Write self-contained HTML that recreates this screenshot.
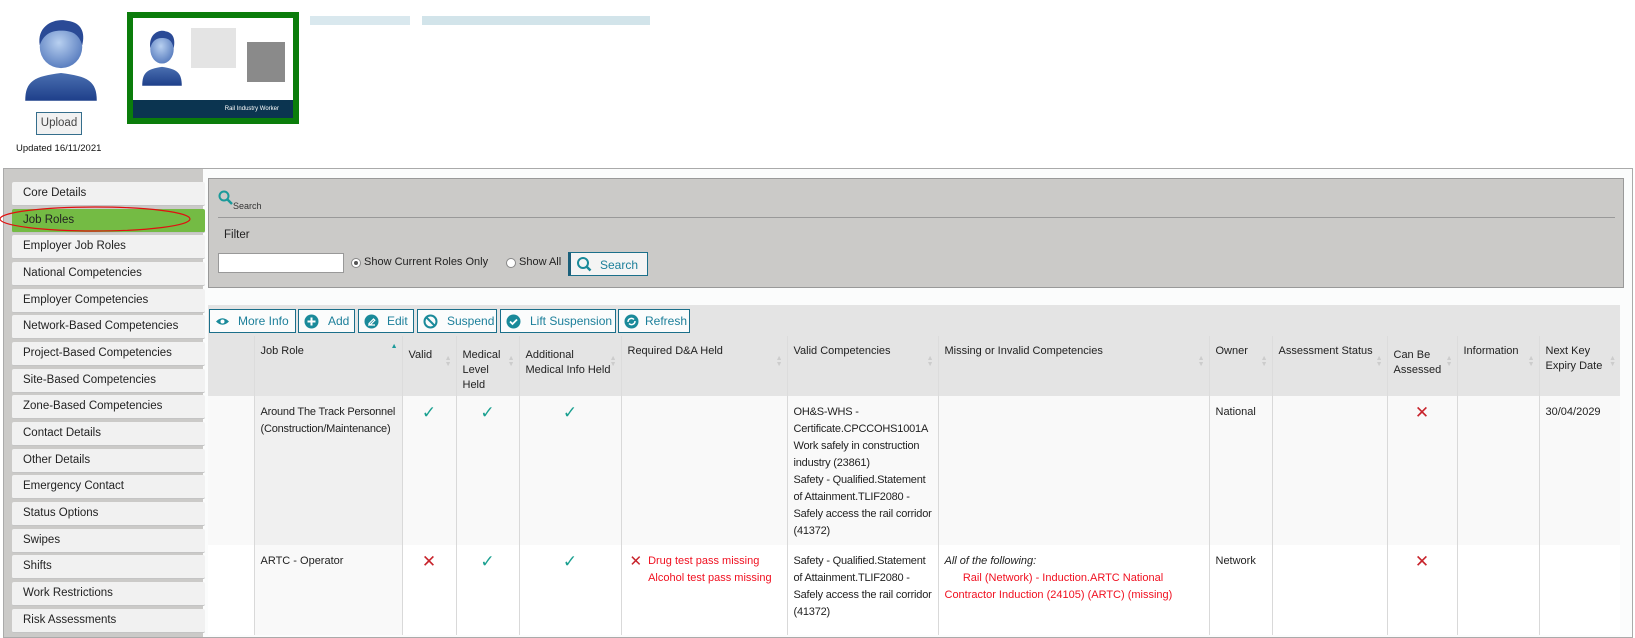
<!DOCTYPE html>
<html><head><meta charset="utf-8"><style>
*{box-sizing:border-box;margin:0;padding:0}
body{width:1635px;height:628px;overflow:hidden;background:#fff;font-family:"Liberation Sans",sans-serif;font-size:12px;color:#222;position:relative}
.abs{position:absolute}
.side{position:absolute;left:3px;top:168px;width:200px;height:470px;background:#cbcac8;border:1px solid #aaa;border-right:none}
.item{position:absolute;left:8px;width:193px;height:24px;background:#f1f1f1;border-radius:2px;border-bottom:1px solid #c4c4c4;padding:5px 0 0 11px;font-size:11.5px;color:#222}
.main{position:absolute;left:202px;top:168px;width:1431px;height:470px;border:1px solid #aaa;background:#fbfcfc}
.panel{position:absolute;left:208px;top:178px;width:1416px;height:110px;background:#cbcac8;border:1px solid #999}
.btn{position:absolute;top:309px;height:24px;border:1px solid #1b6f8a;background:#fbfcfc;color:#1c7f9a;font-size:12px;padding:4px 0 0 0}
.btn svg{position:absolute;left:5px;top:4px}
table{position:absolute;left:208px;top:305px;width:1412px;border-collapse:collapse;table-layout:fixed;font-size:11px}
th{background:#e4e4e4;font-weight:normal;text-align:left;vertical-align:top;padding:8px 6px 0 6px;height:60px;line-height:15px;border-left:1px solid #dcdcdc;position:relative}
td{vertical-align:top;padding:8px 6px 0 6px;line-height:17px;border-left:1px solid #d9d9d9;background:#f9f9f9}
tr.r2 td{background:#fff}
td.jr{background:#f0f0f0}
tr.r2 td.jr{background:#f9f9f9}
.nw{white-space:nowrap;letter-spacing:-0.2px}
.red{color:#f01020}
.srt{position:absolute;right:4px;top:20px;color:#ccc;font-size:7px;line-height:6px}
.c{text-align:center}
</style></head><body>
<svg class="abs" style="left:23px;top:16px" width="76" height="88" viewBox="0 0 68 108" preserveAspectRatio="none">
<defs><linearGradient id="g" x1="0" y1="0" x2="0" y2="1"><stop offset="0" stop-color="#4a6fb0"/><stop offset="1" stop-color="#1e3f8a"/></linearGradient>
<radialGradient id="f" cx=".45" cy=".4" r=".6"><stop offset="0" stop-color="#b8d0f0"/><stop offset="1" stop-color="#5b7fc0"/></radialGradient></defs>
<path d="M2 104 C2 80 10 74 34 70 C58 74 66 80 66 104 Z" fill="url(#g)"/>
<ellipse cx="34" cy="38" rx="19" ry="26" fill="url(#f)"/>
<path d="M15 36 C12 10 30 2 40 6 C52 8 56 20 53 36 C50 22 44 18 34 18 C24 18 18 24 15 36Z" fill="#2a4a96"/>
</svg>
<div class="abs" style="left:36px;top:112px;width:46px;height:23px;border:1px solid #356e8c;background:#f1f1f1;font-size:11.5px;color:#444;text-align:center;padding-top:4px">Upload</div>
<div class="abs" style="left:16px;top:143px;font-size:9.5px;color:#111">Updated 16/11/2021</div>
<div class="abs" style="left:127px;top:12px;width:172px;height:112px;background:#0b7d0b;padding:6px">
 <div style="position:relative;width:160px;height:100px;background:#fff">
  <svg style="position:absolute;left:8px;top:10px" width="42" height="60" viewBox="0 0 68 108" preserveAspectRatio="none"><path d="M2 104 C2 80 10 74 34 70 C58 74 66 80 66 104 Z" fill="url(#g)"/><ellipse cx="34" cy="38" rx="19" ry="26" fill="url(#f)"/><path d="M15 36 C12 10 30 2 40 6 C52 8 56 20 53 36 C50 22 44 18 34 18 C24 18 18 24 15 36Z" fill="#2a4a96"/></svg>
  <div style="position:absolute;left:58px;top:10px;width:45px;height:40px;background:#ddd;opacity:.8"></div>
  <div style="position:absolute;left:114px;top:24px;width:38px;height:40px;background:#8a8a8a"></div>
  <div style="position:absolute;left:0;top:82px;width:160px;height:18px;background:#0b3450;color:#fff;font-size:6px;text-align:right;padding:6px 14px 0 0">Rail Industry Worker</div>
 </div>
</div>
<div class="abs" style="left:310px;top:16px;width:100px;height:9px;background:#d9e8ee"></div>
<div class="abs" style="left:422px;top:16px;width:228px;height:9px;background:#d2e4ea"></div>

<div class="main"></div>
<div class="side">
<div class="item" style="top:13px">Core Details</div>
<div class="item" style="top:40px;background:#74bb44">Job Roles</div>
<div class="item" style="top:66px">Employer Job Roles</div>
<div class="item" style="top:93px">National Competencies</div>
<div class="item" style="top:120px">Employer Competencies</div>
<div class="item" style="top:146px">Network-Based Competencies</div>
<div class="item" style="top:173px">Project-Based Competencies</div>
<div class="item" style="top:200px">Site-Based Competencies</div>
<div class="item" style="top:226px">Zone-Based Competencies</div>
<div class="item" style="top:253px">Contact Details</div>
<div class="item" style="top:280px">Other Details</div>
<div class="item" style="top:306px">Emergency Contact</div>
<div class="item" style="top:333px">Status Options</div>
<div class="item" style="top:360px">Swipes</div>
<div class="item" style="top:386px">Shifts</div>
<div class="item" style="top:413px">Work Restrictions</div>
<div class="item" style="top:440px">Risk Assessments</div>
</div>
<svg class="abs" style="left:0;top:201px" width="200" height="36"><ellipse cx="95" cy="18" rx="95" ry="12" fill="none" stroke="#e01010" stroke-width="1.2"/></svg>

<div class="panel">
 <svg style="position:absolute;left:9px;top:11px" width="16" height="16"><circle cx="6" cy="6" r="4.5" fill="none" stroke="#1a9a9a" stroke-width="2"/><path d="M9 9 L14 14" stroke="#1a9a9a" stroke-width="2.5"/></svg>
 <div style="position:absolute;left:24px;top:22px;font-size:9px;color:#333">Search</div>
 <div style="position:absolute;left:9px;top:38px;width:1397px;height:1px;background:#999"></div>
 <div style="position:absolute;left:15px;top:50px;font-size:11.5px">Filter</div>
 <div style="position:absolute;left:9px;top:74px;width:126px;height:20px;background:#fff;border:1px solid #999"></div>
 <div style="position:absolute;left:142px;top:79px;width:10px;height:10px;border-radius:50%;border:1px solid #888;background:#fff"><div style="margin:2px;width:4px;height:4px;border-radius:50%;background:#555"></div></div>
 <div style="position:absolute;left:155px;top:77px;font-size:11px">Show Current Roles Only</div>
 <div style="position:absolute;left:297px;top:79px;width:10px;height:10px;border-radius:50%;border:1px solid #888;background:#fff"></div>
 <div style="position:absolute;left:310px;top:77px;font-size:11px">Show All</div>
 <div style="position:absolute;left:359px;top:73px;width:80px;height:24px;background:#f4f4f4;border:1px solid #1b6f8a;border-left:3px solid #1b5f7a;color:#1c7f9a;padding:5px 0 0 29px">Search
 <svg style="position:absolute;left:5px;top:3px" width="16" height="16"><circle cx="7" cy="7" r="5" fill="none" stroke="#1a8a9a" stroke-width="2"/><path d="M10.5 10.5 L14.5 14.5" stroke="#1a8a9a" stroke-width="2.5"/></svg></div>
</div>

<div class="abs" style="left:208px;top:305px;width:1412px;height:31px;background:#e4e4e4"></div>
<div class="btn" style="left:209px;width:87px;padding-left:28px"><svg width="15" height="15"><path d="M1 7.5 Q7.5 1 14 7.5 Q7.5 14 1 7.5Z" fill="#1a8a9a"/><circle cx="7.5" cy="7.5" r="2" fill="#fff"/></svg>More Info</div>
<div class="btn" style="left:298px;width:57px;padding-left:29px"><svg width="15" height="15"><circle cx="7.5" cy="7.5" r="7" fill="#1a8a9a"/><path d="M7.5 3.5v8M3.5 7.5h8" stroke="#fff" stroke-width="2"/></svg>Add</div>
<div class="btn" style="left:358px;width:56px;padding-left:28px"><svg width="15" height="15"><circle cx="7.5" cy="7.5" r="7" fill="#1a8a9a"/><path d="M4 11h7M5 9.5l4.5-4.5 1.3 1.3-4.5 4.5z" stroke="#fff" stroke-width="1.2" fill="none"/></svg>Edit</div>
<div class="btn" style="left:417px;width:80px;padding-left:29px"><svg width="15" height="15"><circle cx="7.5" cy="7.5" r="6" fill="none" stroke="#1a8a9a" stroke-width="2"/><path d="M3.5 3.5l8 8" stroke="#1a8a9a" stroke-width="2"/></svg>Suspend</div>
<div class="btn" style="left:500px;width:116px;padding-left:29px"><svg width="15" height="15"><circle cx="7.5" cy="7.5" r="7" fill="#1a8a9a"/><path d="M4 7.5l2.5 2.5 4.5-4.5" stroke="#fff" stroke-width="1.8" fill="none"/></svg>Lift Suspension</div>
<div class="btn" style="left:618px;width:72px;padding-left:26px"><svg width="15" height="15"><circle cx="7.5" cy="7.5" r="7" fill="#1a8a9a"/><path d="M4 8a3.5 3.5 0 0 1 6-2.5M11 7a3.5 3.5 0 0 1-6 2.5" stroke="#fff" stroke-width="1.5" fill="none"/></svg>Refresh</div>

<table style="top:336px">
<colgroup><col style="width:46px"><col style="width:148px"><col style="width:54px"><col style="width:63px"><col style="width:102px"><col style="width:166px"><col style="width:151px"><col style="width:271px"><col style="width:63px"><col style="width:115px"><col style="width:70px"><col style="width:82px"><col style="width:81px"></colgroup>
<tr><th style="border-left:none"></th><th>Job Role<span class="srt" style="color:#1a9a9a;top:8px">▲</span></th><th style="padding-top:12px">Valid<span class="srt">▲<br>▼</span></th><th style="padding-top:12px">Medical Level Held<span class="srt">▲<br>▼</span></th><th style="padding-top:12px">Additional Medical Info Held<span class="srt">▲<br>▼</span></th><th>Required D&amp;A Held<span class="srt">▲<br>▼</span></th><th>Valid Competencies<span class="srt">▲<br>▼</span></th><th>Missing or Invalid Competencies<span class="srt">▲<br>▼</span></th><th>Owner<span class="srt">▲<br>▼</span></th><th>Assessment Status<span class="srt">▲<br>▼</span></th><th style="padding-top:12px">Can Be Assessed<span class="srt">▲<br>▼</span></th><th>Information<span class="srt">▲<br>▼</span></th><th>Next Key Expiry Date<span class="srt">▲<br>▼</span></th></tr>
<tr style="height:149px"><td style="border-left:none"></td><td class="jr nw">Around The Track Personnel<br>(Construction/Maintenance)</td><td class="c" style="color:#1aa090;font-size:17px">✓</td><td class="c" style="color:#1aa090;font-size:17px">✓</td><td class="c" style="color:#1aa090;font-size:17px">✓</td><td></td><td class="nw">OH&amp;S-WHS -<br>Certificate.CPCCOHS1001A<br>Work safely in construction<br>industry (23861)<br>Safety - Qualified.Statement<br>of Attainment.TLIF2080 -<br>Safely access the rail corridor<br>(41372)</td><td></td><td>National</td><td></td><td class="c" style="color:#c8242c;font-size:17px">✕</td><td></td><td>30/04/2029</td></tr>
<tr class="r2" style="height:90px"><td style="border-left:none"></td><td class="jr">ARTC - Operator</td><td class="c" style="color:#c8242c;font-size:17px">✕</td><td class="c" style="color:#1aa090;font-size:17px">✓</td><td class="c" style="color:#1aa090;font-size:17px">✓</td><td><span style="color:#c8242c;font-size:15px;float:left;margin:0 6px 14px 2px">✕</span><span class="red">Drug test pass missing<br>Alcohol test pass missing</span></td><td class="nw">Safety - Qualified.Statement<br>of Attainment.TLIF2080 -<br>Safely access the rail corridor<br>(41372)</td><td><i>All of the following:</i><br><span class="red">&nbsp;&nbsp;&nbsp;&nbsp;&nbsp;&nbsp;Rail (Network) - Induction.ARTC National<br>Contractor Induction (24105) (ARTC) (missing)</span></td><td>Network</td><td></td><td class="c" style="color:#c8242c;font-size:17px">✕</td><td></td><td></td></tr>
</table>
</body></html>
